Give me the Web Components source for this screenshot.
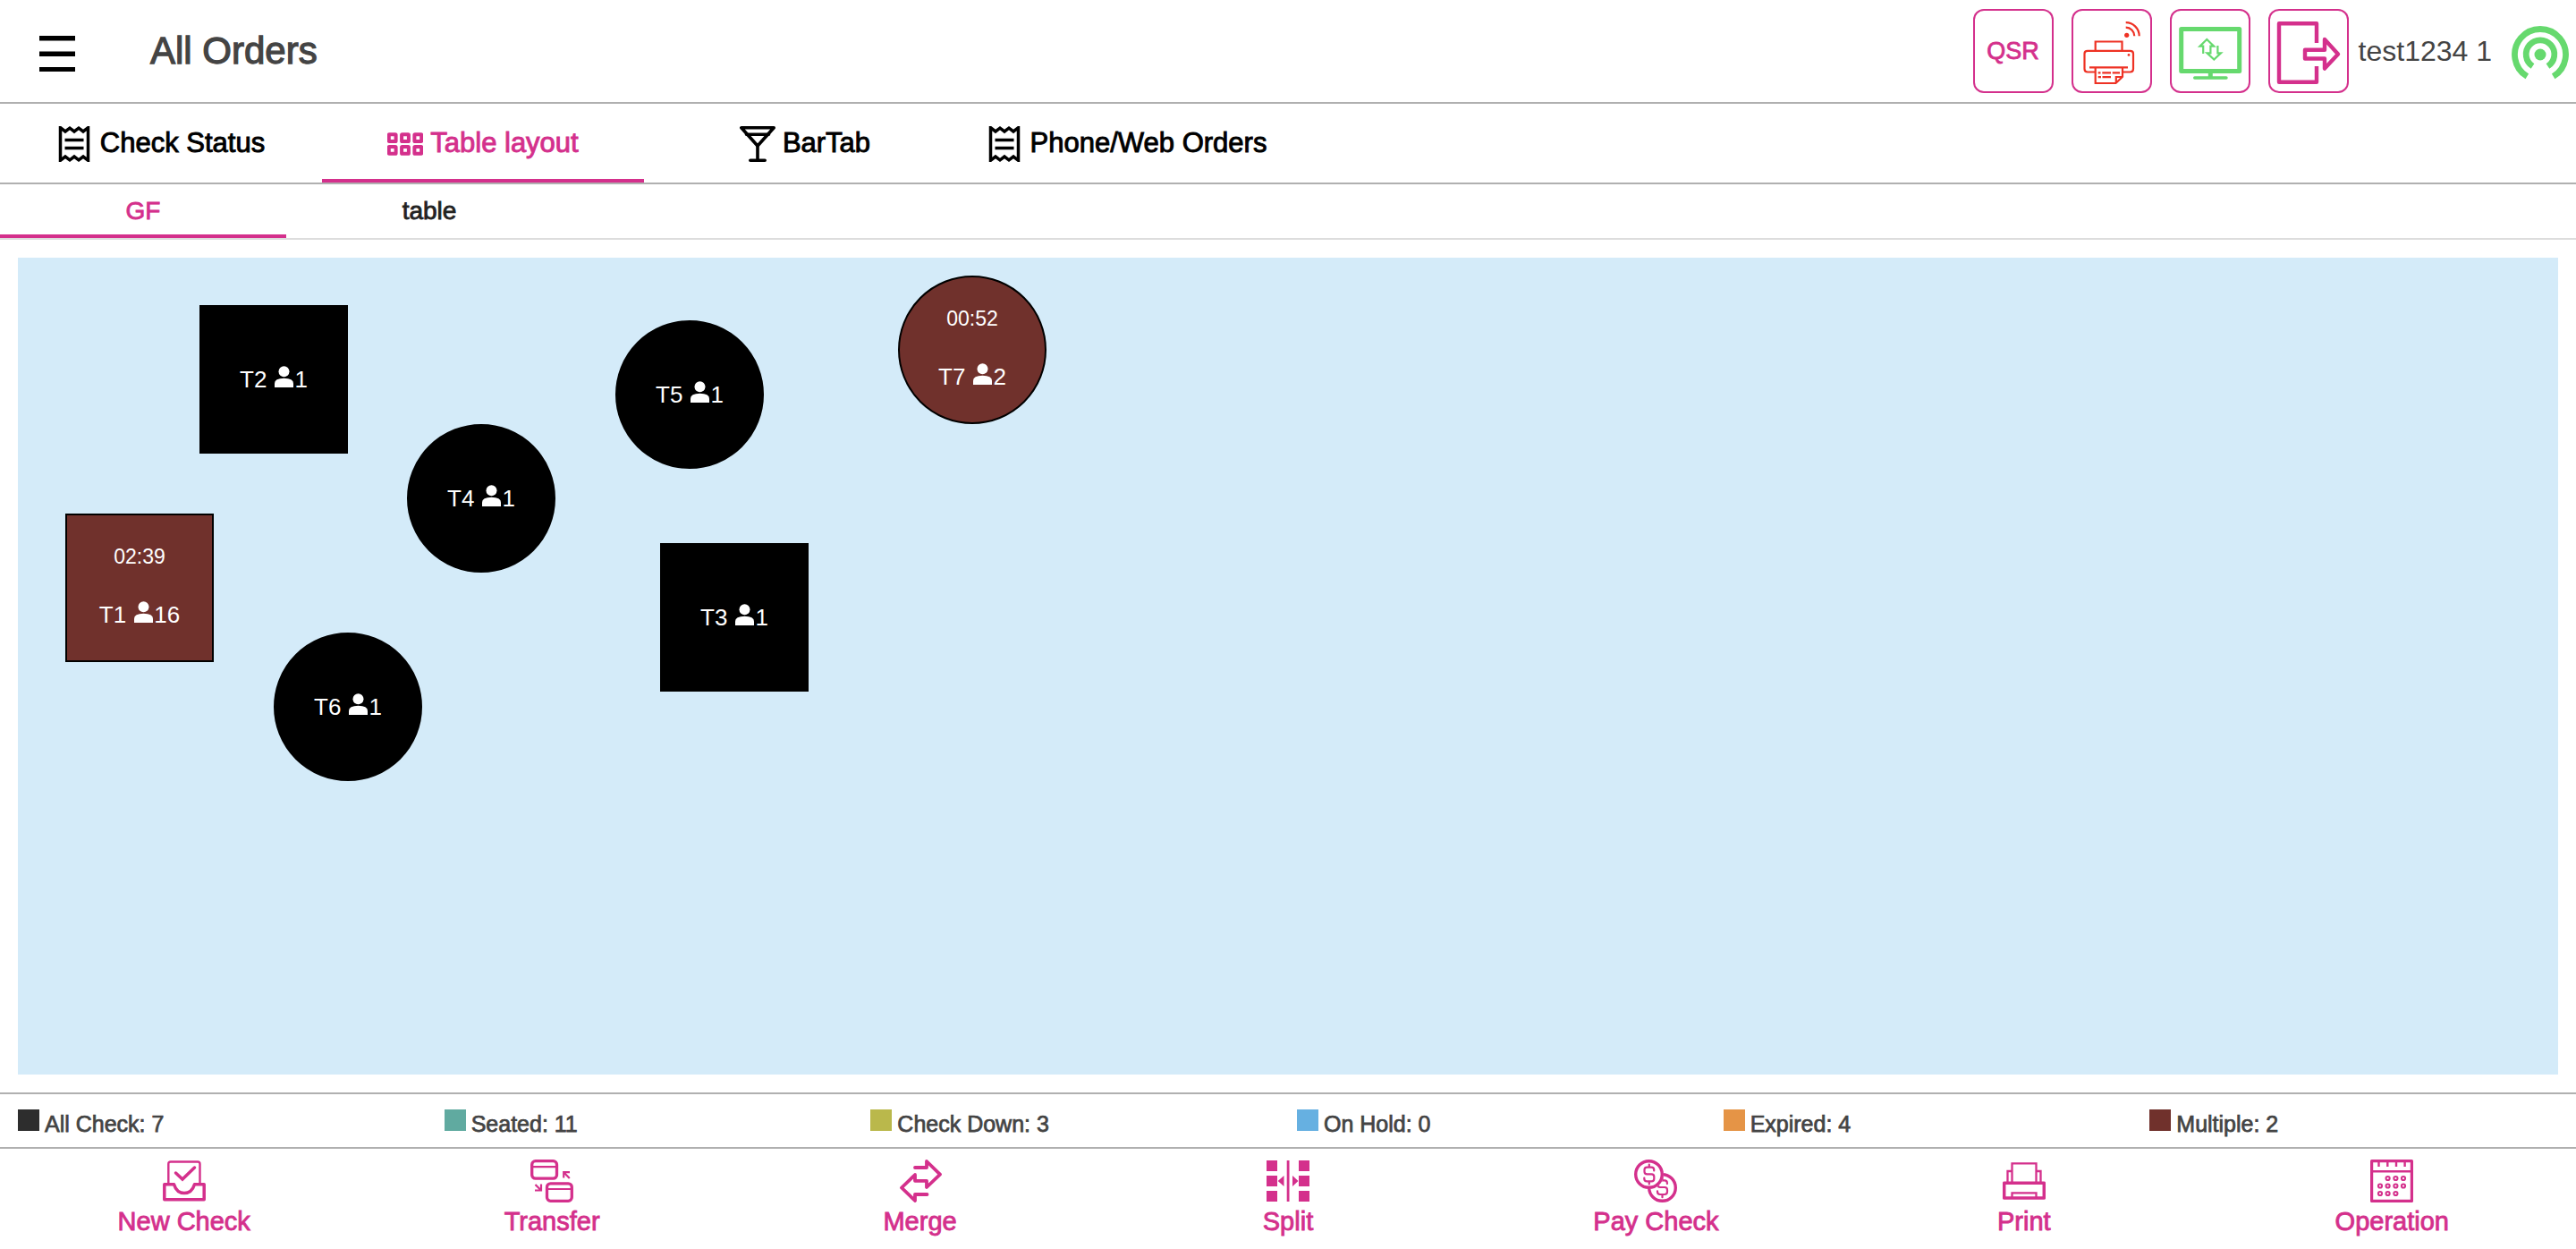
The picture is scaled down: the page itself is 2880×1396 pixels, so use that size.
<!DOCTYPE html>
<html lang="en">
<head>
<meta charset="utf-8">
<meta name="viewport" content="width=device-width, initial-scale=1">
<title>All Orders</title>
<style>
  :root {
    --pink: #d4308c;
    --green: #66d96e;
    --red: #ee3224;
    --line: #b0b0b0;
    --ink: #444;
    --thicken: 0.03em;
  }
  body { margin: 0; background: #fff; font-family: "Liberation Sans", Arial, sans-serif; color: var(--ink); }
</style>
</head>
<body>
<pos-app>
  <pos-header slot="header" heading="All Orders" user="test1234 1">
    <tool-button label="QSR">QSR</tool-button>
    <tool-button label="Printer status"><pos-icon name="cloudprinter"></pos-icon></tool-button>
    <tool-button label="Sync display"><pos-icon name="monitor"></pos-icon></tool-button>
    <tool-button label="Log out"><pos-icon name="logout"></pos-icon></tool-button>
  </pos-header>

  <tab-bar slot="header" label="Order views">
    <tab-item icon="receipt">Check Status</tab-item>
    <tab-item icon="grid" selected>Table layout</tab-item>
    <tab-item icon="cocktail">BarTab</tab-item>
    <tab-item icon="receipt">Phone/Web Orders</tab-item>
  </tab-bar>

  <tab-bar slot="header" variant="sub" label="Floors">
    <tab-item variant="sub" selected>GF</tab-item>
    <tab-item variant="sub">table</tab-item>
  </tab-bar>

  <floor-map>
    <floor-table name="T1" guests="16" time="02:39" x="53" y="286"></floor-table>
    <floor-table name="T2" guests="1" x="203" y="53"></floor-table>
    <floor-table name="T3" guests="1" x="718" y="319"></floor-table>
    <floor-table name="T4" guests="1" round x="435" y="186"></floor-table>
    <floor-table name="T5" guests="1" round x="668" y="70"></floor-table>
    <floor-table name="T6" guests="1" round x="286" y="419"></floor-table>
    <floor-table name="T7" guests="2" round time="00:52" x="984" y="20"></floor-table>
  </floor-map>

  <status-legend slot="footer">
    <legend-item color="#2d2d2d">All Check: 7</legend-item>
    <legend-item color="#60aaa0">Seated: 11</legend-item>
    <legend-item color="#bab84b">Check Down: 3</legend-item>
    <legend-item color="#66b0e1">On Hold: 0</legend-item>
    <legend-item color="#e59446">Expired: 4</legend-item>
    <legend-item color="#70312c">Multiple: 2</legend-item>
  </status-legend>

  <action-bar slot="footer">
    <action-button icon="newcheck">New Check</action-button>
    <action-button icon="transfer">Transfer</action-button>
    <action-button icon="merge">Merge</action-button>
    <action-button icon="split">Split</action-button>
    <action-button icon="coins">Pay Check</action-button>
    <action-button icon="print">Print</action-button>
    <action-button icon="calendar">Operation</action-button>
  </action-bar>
</pos-app>

<script>
const rings = [[19.6,21],[28.4,21],[37,21],[11,29.5],[19.6,29.5],[28.4,29.5],[37,29.5],[11,38],[19.6,38],[28.4,38]]
  .map(([x, y]) => `<circle cx="${x}" cy="${y}" r="2.1"/>`).join('');
const dollar = 'M22.2 12.4V11.6Q22.2 8.7 19.3 8.7H14.4Q11.5 8.7 11.5 11.6V13.4Q11.5 16.3 14.4 16.3H19.4Q22.3 16.3 22.3 19.2V21.4Q22.3 24.3 19.4 24.3H14.2Q11.3 24.3 11.3 21.4V20.6M16.8 5.5V8.7M16.8 24.3V27.5';

const ICONS = {
  menu: [44, 44, `<path fill="currentColor" d="M2 2H42V7.500H2ZM2 19.500H42V25H2ZM2 37H42V42H2Z"/>`],
  receipt: [40, 40, `<g stroke-width="3.5"><path d="M3.500 1.700L9 6L14 2.200L19 6L24 2.200L29 6L34.500 1.700V38.300L29 34L24 37.800L19 34L14 37.800L9 34L3.500 38.300Z"/><path d="M8.500 15.500H29.500M8.500 24.500H29.500"/></g>`],
  grid: [40, 40, `<g stroke-width="4"><rect x="1.800" y="9.200" width="7.800" height="7.800" rx=".6"/><rect x="16.100" y="9.200" width="7.800" height="7.800" rx=".6"/><rect x="30.400" y="9.200" width="7.800" height="7.800" rx=".6"/><rect x="1.800" y="23" width="7.800" height="7.800" rx=".6"/><rect x="16.100" y="23" width="7.800" height="7.800" rx=".6"/><rect x="30.400" y="23" width="7.800" height="7.800" rx=".6"/></g>`],
  cocktail: [40, 40, `<g stroke-width="3.6" stroke-linecap="round"><path stroke-linejoin="round" d="M1.800 1.800H38.200L20 22Z"/><path d="M7.500 9.300H32.500M20 22V38M11.800 38.200H28.200"/></g>`],
  cloudprinter: [90, 94, `<g stroke="var(--red)" stroke-width="2.2"><path d="M26.700 46.700V36.500H56.500V46.700M26.500 70.500H18Q14.500 70.500 14.500 67V50Q14.500 46.900 18 46.900H65.500Q69 46.900 69 50V67Q69 70.500 65.500 70.500H57M20 65.400H63M26.700 65.400V83H49.500L57 75.700V65.400M49.800 83V76H57"/><path d="M29.700 71.400H32.500M34.300 71.400H44M45.700 71.400H54M29.700 76.200H33M34.500 76.200H44"/><path d="M60.700 20.700A9.800 9.800 0 0 1 70.300 30.300M60.700 15.200A15 15 0 0 1 75.700 30.300"/></g><circle cx="64" cy="51.400" r="1.400" fill="var(--red)"/><circle cx="61.700" cy="29.300" r="2.600" fill="var(--red)"/>`],
  monitor: [90, 94, `<g stroke="var(--green)"><rect x="12.700" y="22.500" width="65" height="47" stroke-width="5" stroke-linejoin="round"/><path stroke-width="5" d="M45.300 70V77"/><path stroke-width="3.400" stroke-linecap="round" d="M27.700 77H63"/><path stroke-width="2.200" d="M37.200 50V41.600H33.500L41.300 34L49.200 41.600H45.400V49.300H41.500L49.300 56.500L57 49.300H53.400V41"/></g>`],
  logout: [90, 94, `<g stroke-width="4.4" stroke-linejoin="round"><path d="M54 38V16.200H12V81.800H54V64"/><path d="M41 45.700H63V34L78 50.400L63 66.600V55.500H41Z"/></g>`],
  antenna: [66, 66, `<g stroke="var(--green)" stroke-width="6.800"><path d="M18.300 57.400A28.500 28.500 0 1 1 47.700 57.400"/><path d="M24.500 46A15.800 15.800 0 1 1 41.500 46"/></g><circle cx="33" cy="33" r="6.500" fill="var(--green)"/>`],
  person: [21, 24, `<circle cx="10.500" cy="6.200" r="6" fill="currentColor"/><path fill="currentColor" d="M0 24V19.500Q0 14 10.500 13.800Q21 14 21 19.500V24Z"/>`],
  newcheck: [48, 48, `<path stroke-width="2.400" d="M6.300 26V5Q6.300 2.500 8.800 2.500H39Q41.500 2.500 41.500 5V26"/><path stroke-width="3.500" stroke-linecap="round" d="M14.500 15L22 22L35.500 9"/><path stroke-width="3.500" stroke-linejoin="round" d="M1.800 27.700H12.500Q15.500 37.500 24 37.500Q32.500 37.500 35.500 27.700H46.200V44.700H1.800Z"/>`],
  transfer: [48, 48, `<g stroke-width="3.300"><rect x="1.700" y="1.700" width="27.800" height="19.500" rx="4"/><rect x="18.500" y="26.800" width="27.800" height="19.500" rx="4"/></g><path stroke-width="2.200" d="M1 8.200H30M18 33H47M37.200 20.500V14.200H44M37.700 14.700L43.800 21M5.500 28L11.500 34M12 27.500V34.500H5"/>`],
  merge: [48, 48, `<path stroke-width="3.800" stroke-linecap="round" stroke-linejoin="round" d="M18 9H31V2L46 16.600L31 31V23.800H18V17L3 31.500L18 46V39H31.500"/>`],
  split: [48, 48, `<path fill="currentColor" d="M0 1H12V13H0ZM0 18H12V30H0ZM0 35H12V47H0ZM36 1H48V13H36ZM36 18H48V30H36ZM36 35H48V47H36ZM22.700 1H25.500V47H22.700ZM12.700 24L19.500 18V30ZM35.500 24L29 18V30Z"/>`],
  coins: [48, 48, `<defs><clipPath id="back"><path clip-rule="evenodd" d="M0 0H48V48H0ZM0 16.500A16.500 16.500 0 1 0 33 16.500A16.500 16.500 0 1 0 0 16.500Z"/></clipPath></defs><g clip-path="url(#back)"><circle cx="31.500" cy="31.500" r="14.800" stroke-width="3.400"/><path transform="translate(14.700 14.700)" stroke-width="2.200" stroke-linecap="round" d="${dollar}"/></g><circle cx="16.500" cy="16.500" r="14.800" stroke-width="3.400"/><path stroke-width="2.200" stroke-linecap="round" d="${dollar}"/>`],
  print: [48, 48, `<path stroke-width="2.300" d="M10.500 25.500V4.300H37.500V25.500M5.500 25.500V13H10.500M37.500 13H42.500V25.500M10.500 42.500V37.300H37.500V42.500"/><path stroke-width="3.500" stroke-linejoin="round" d="M1.700 26.300H46.300V43H1.700Z"/>`],
  calendar: [48, 48, `<path stroke-width="3.200" stroke-linejoin="round" d="M1.600 1.600H46.400V46.400H1.600Z"/><path stroke-width="2.400" d="M1 13.300H47M9.500 3V8M19.300 3V8M29 3V8M38.600 3V8"/><g stroke-width="2">${rings}</g>`]
};

const define = (tag, css, html) => customElements.define(tag, class extends HTMLElement {
  connectedCallback() {
    if (this.shadowRoot) return;
    const attr = (name, fallback = '') => this.getAttribute(name) ?? fallback;
    this.attachShadow({ mode: 'open' }).innerHTML =
      `<style>*{box-sizing:border-box}button{font:inherit;color:inherit;background:none;border:0;padding:0;margin:0;cursor:pointer}${css}</style>${html(attr, this)}`;
  }
});

define('pos-icon', `:host{display:inline-flex;flex:none} svg{display:block}`, attr => {
  const [w, h, body] = ICONS[attr('name')];
  return `<svg width="${w}" height="${h}" viewBox="0 0 ${w} ${h}" fill="none" stroke="currentColor" stroke-width="0" aria-hidden="true">${body}</svg>`;
});

define('pos-app', `
  :host{display:flex;flex-direction:column;min-height:100vh}
  main{flex:1;display:flex;padding:20px}
`, () => `<slot name="header"></slot><main><slot></slot></main><slot name="footer"></slot>`);

define('pos-header', `
  :host{display:block}
  header{display:flex;align-items:center;height:116px;padding:0 7px 0 42px;border-bottom:2px solid var(--line)}
  .menu{display:flex;color:#000;padding-top:6px}
  h1{flex:1;margin:0 0 0 82px;font-size:42px;line-height:48px;font-weight:400;-webkit-text-stroke:var(--thicken) currentColor}
  .tools{display:flex;gap:20px}
  .user{margin:0 21px 0 11px;font-size:32px;line-height:36px}
  .signal{padding-top:8px}
`, attr => `<header>
    <button class="menu" aria-label="Menu"><pos-icon name="menu"></pos-icon></button>
    <h1>${attr('heading')}</h1>
    <div class="tools"><slot></slot></div>
    <span class="user">${attr('user')}</span>
    <pos-icon class="signal" name="antenna"></pos-icon>
  </header>`);

define('tool-button', `
  :host{display:block}
  button{display:flex;align-items:center;justify-content:center;width:90px;height:94px;color:var(--pink);
    box-shadow:inset 0 0 0 2px var(--pink);border-radius:12px;font-size:27px;line-height:32px;-webkit-text-stroke:var(--thicken) currentColor}
`, attr => `<button aria-label="${attr('label')}"><slot></slot></button>`);

define('tab-bar', `
  :host{display:block}
  nav{display:flex;height:90px;border-bottom:2px solid var(--line);box-sizing:border-box}
  :host([variant=sub]) nav{height:62px;border-color:#ddd}
`, attr => `<nav role="tablist" aria-label="${attr('label')}"><slot></slot></nav>`);

define('tab-item', `
  :host{display:flex;width:12.5%;min-width:320px;color:#000}
  :host([variant=sub]){width:320px;color:#222}
  :host([selected]){color:var(--pink)}
  button{flex:1;display:flex;align-items:center;justify-content:center;gap:8px;border-bottom:4px solid transparent;
    font-size:31px;line-height:36px;-webkit-text-stroke:var(--thicken) currentColor;white-space:nowrap}
  pos-icon{padding-top:6px}
  span{padding-top:4px}
  :host([variant=sub]) button{font-size:28px;line-height:32px}
  :host([selected]) button{border-color:var(--pink)}
`, (attr, el) => `<button role="tab" aria-selected="${el.hasAttribute('selected')}">${
    attr('icon') ? `<pos-icon name="${attr('icon')}"></pos-icon>` : ''}<span><slot></slot></span></button>`);

define('floor-map', `
  :host{display:block;flex:1;position:relative;background:#d4ebf9;min-height:620px}
`, () => `<slot></slot>`);

define('floor-table', `
  :host{position:absolute;display:block;color:#fff}
  button{display:flex;flex-direction:column;align-items:center;justify-content:center;gap:36px;width:166px;height:166px;
    background:#000;border:2px solid #000}
  :host([round]) button{border-radius:50%}
  :host([time]) button{background:#70312c;padding-bottom:4px}
  .time{font-size:23px;line-height:28px}
  .seat{display:flex;align-items:center;font-size:26px;line-height:30px}
  pos-icon{margin:0 1px 6px 9px}
`, (attr, el) => {
  el.style.left = attr('x') + 'px';
  el.style.top = attr('y') + 'px';
  return `<button>${attr('time') ? `<span class="time">${attr('time')}</span>` : ''}
    <span class="seat"><span>${attr('name')}</span><pos-icon name="person"></pos-icon><span>${attr('guests')}</span></span></button>`;
});

define('status-legend', `
  :host{display:grid;grid-template-columns:repeat(6,1fr);height:63px;padding:0 0 0 20px;
    border-top:2px solid var(--line);border-bottom:2px solid var(--line);box-sizing:border-box}
`, () => `<slot></slot>`);

define('legend-item', `
  :host{display:flex;align-items:center;gap:6px;font-size:25px;line-height:28px;-webkit-text-stroke:var(--thicken) currentColor}
  i{width:24px;height:24px;margin-bottom:2px}
  span{padding-top:6px}
`, attr => `<i style="background:${attr('color')}"></i><span><slot></slot></span>`);

define('action-bar', `
  :host{display:grid;grid-template-columns:repeat(7,1fr);height:112px}
`, () => `<slot></slot>`);

define('action-button', `
  :host{display:flex;color:var(--pink)}
  button{flex:1;display:flex;flex-direction:column;align-items:center;padding-top:12px;gap:4px;
    font-size:29px;line-height:34px;-webkit-text-stroke:var(--thicken) currentColor}
`, attr => `<button><pos-icon name="${attr('icon')}"></pos-icon><span><slot></slot></span></button>`);
</script>
</body>
</html>
